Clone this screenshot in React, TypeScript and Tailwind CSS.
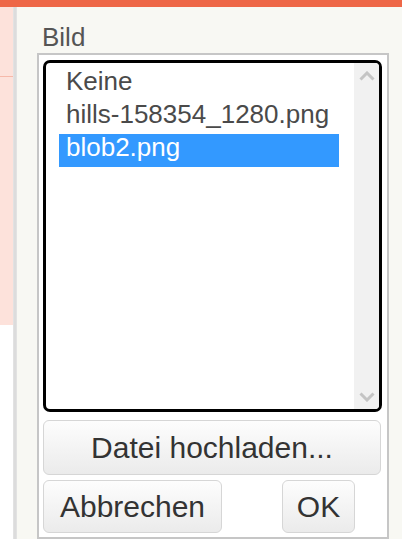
import { useState } from "react";

const FILES = ["Keine", "hills-158354_1280.png", "blob2.png"];

function Chevron({ up }: { up?: boolean }) {
  return (
    <svg width="16" height="10" viewBox="0 0 16 10" className="text-[#c4c4c4]">
      <path
        d={up ? "M1.5 8.5 L8 2 L14.5 8.5" : "M1.5 1.5 L8 8 L14.5 1.5"}
        fill="none"
        stroke="currentColor"
        strokeWidth="3"
      />
    </svg>
  );
}

export default function App() {
  const [selected, setSelected] = useState(2);

  return (
    <div className="flex h-[539px] w-[402px] flex-col overflow-hidden bg-white font-['Liberation_Sans',Arial,sans-serif]">
      <div className="h-[7px] shrink-0 bg-[#ee6747]" />

      <div className="flex min-h-0 flex-1">
        {/* page behind the dialog */}
        <div className="flex w-[13px] flex-col">
          <div className="h-[318px] bg-[#fde2db]">
            <div className="mt-[69px] h-px bg-[#f6b9aa]" />
          </div>
        </div>
        <div className="w-[4px] border-x border-[#e2e2e2] bg-[#dcdcdc]" />

        {/* dialog body */}
        <div className="flex flex-1 flex-col bg-[#f8f8f3] pl-[20px] pr-[13px] pt-[15px]">
          <label className="ml-[5px] text-[26px] leading-[30px] text-[#555]">Bild</label>

          <div className="mt-px flex flex-1 flex-col border-2 border-[#c6c6c6] bg-white pl-[4px] pr-[5px] pt-[5px]">
            <div className="flex h-[352px] shrink-0 overflow-hidden rounded-[7px] border-[3px] border-black">
              <ul className="flex-1 pl-[13px] pr-[15px] pt-[5px]">
                {FILES.map((f, i) => (
                  <li
                    key={f}
                    onClick={() => setSelected(i)}
                    className={`h-[33px] cursor-default pl-[7px] text-[26px] leading-[26px] ${
                      selected === i ? "bg-[#3399ff] text-white" : "text-[#4a4a4a]"
                    }`}
                  >
                    {f}
                  </li>
                ))}
              </ul>
              <div className="flex w-[25px] flex-col items-center justify-between bg-[#f1f1f1] pb-[7px] pt-[8px]">
                <Chevron up />
                <Chevron />
              </div>
            </div>

            <button className="mt-[8px] h-[55px] w-[338px] shrink-0 rounded-[6px] border border-[#d6d6d6] bg-gradient-to-b from-[#fdfdfd] to-[#ebebeb] text-[30px] text-[#333]">
              Datei hochladen...
            </button>

            <div className="mt-[5px] flex gap-[60px]">
              <button className="h-[53px] w-[179px] rounded-[6px] border border-[#d6d6d6] bg-gradient-to-b from-[#fdfdfd] to-[#ebebeb] text-[30px] text-[#333]">
                Abbrechen
              </button>
              <button className="h-[53px] w-[73px] rounded-[6px] border border-[#d6d6d6] bg-gradient-to-b from-[#fdfdfd] to-[#ebebeb] text-[30px] text-[#333]">
                OK
              </button>
            </div>
          </div>
        </div>
      </div>
    </div>
  );
}
